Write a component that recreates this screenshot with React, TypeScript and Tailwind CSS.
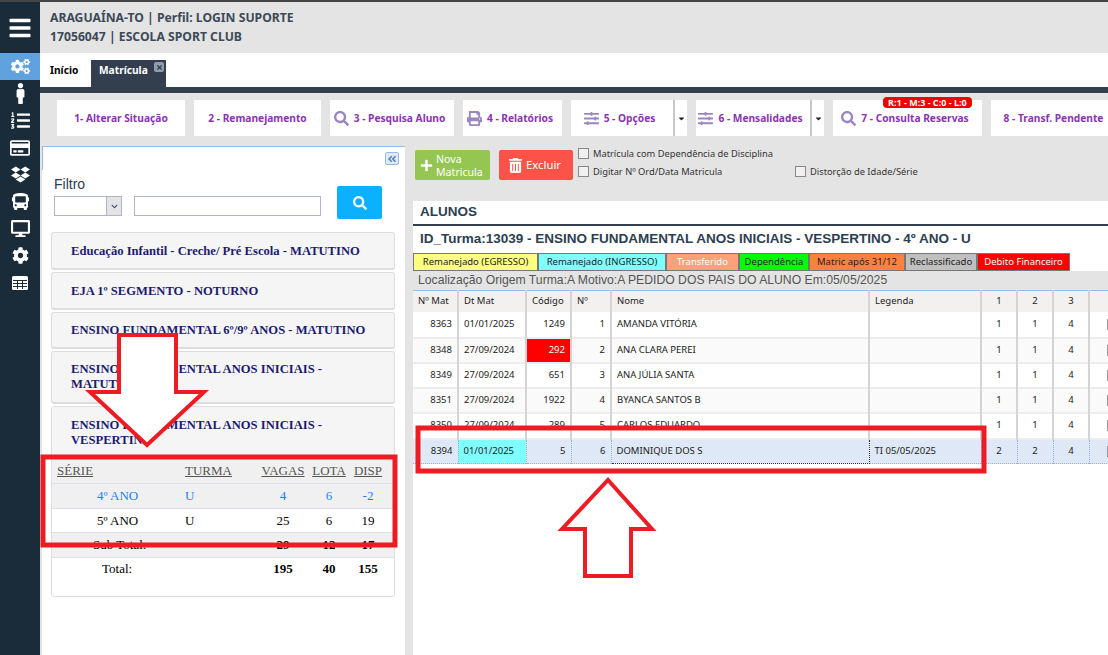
import React from 'react';
import {
  FaBars, FaCogs, FaMale, FaListOl, FaRegCreditCard, FaDropbox, FaBus, FaDesktop, FaCog,
  FaSearch, FaPrint, FaSlidersH, FaPlus, FaTrashAlt, FaTimes, FaAngleDoubleLeft, FaChevronDown, FaCaretDown,
} from 'react-icons/fa';

// FA4 style table, the FA5 one in react-icons has too few cells
const TableIcon = () => (
  <svg width="16" height="14" viewBox="0 0 16 14">
    <rect width="16" height="14" rx="1.5" fill="#fff" />
    <path d="M1 4.5H15M1 7.5H15M1 10.5H15M5.5 4V13M10.5 4V13" stroke="#1a2b3a" strokeWidth="1" />
  </svg>
);

const sideIcons = [
  <FaMale className="text-[21px]" />,
  <FaListOl className="text-[19px]" />,
  <FaRegCreditCard className="text-[20px]" />,
  <FaDropbox className="text-[19px]" />,
  <FaBus className="text-[17px]" />,
  <FaDesktop className="text-[19px]" />,
  <FaCog className="text-[17px]" />,
  <TableIcon />,
];

const ToolButton = ({ label, icon: Icon, width, caret, badge, nudge }: { label: string; icon?: any; width: string; caret?: boolean; badge?: string; nudge?: boolean }) => (
  <div className="flex shrink-0">
    <div className={`relative flex h-[36px] items-center justify-center gap-[5px] bg-white ${width} ${caret ? 'border-r-2 border-[#c8c8c8]' : ''} ${Icon || nudge ? 'pr-[5px]' : ''}`}>
      {Icon && <Icon className="text-[15px] text-[#9b86c0]" />}
      <span className="whitespace-nowrap pt-[1px] text-[10.2px] font-bold text-[#8a34b0]">{label}</span>
      {badge && (
        <span className="absolute left-[50px] top-[-3px] rounded-[4px] bg-[#f00000] px-[5px] text-[9px] font-bold leading-[11px] text-white">{badge}</span>
      )}
    </div>
    {caret && (
      <div className="flex h-[36px] w-[12px] items-center justify-center bg-white">
        <FaCaretDown className="text-[9px] text-[#222]" />
      </div>
    )}
  </div>
);

const accordion = [
  { title: 'Educação Infantil - Creche/ Pré Escola - MATUTINO', h: 'h-[38px] pt-[2px]' },
  { title: 'EJA 1º SEGMENTO - NOTURNO', h: 'h-[38px] pt-[2px]' },
  { title: 'ENSINO FUNDAMENTAL 6º/9º ANOS - MATUTINO', h: 'h-[37px]' },
  { title: 'ENSINO FUNDAMENTAL ANOS INICIAIS - MATUTINO', h: 'h-[53px]' },
];

const legend = [
  { label: 'Remanejado (EGRESSO)', w: 'w-[125px]', bg: 'bg-[#ffff80]', text: 'text-[#222]' },
  { label: 'Remanejado (INGRESSO)', w: 'w-[128px]', bg: 'bg-[#80ffff]', text: 'text-[#222]' },
  { label: 'Transferido', w: 'w-[73px]', bg: 'bg-[#ffa07a]', text: 'text-white' },
  { label: 'Dependência', w: 'w-[70px]', bg: 'bg-[#00ff00]', text: 'text-[#222]' },
  { label: 'Matric após 31/12', w: 'w-[96px]', bg: 'bg-[#ff8040]', text: 'text-[#222]' },
  { label: 'Reclassificado', w: 'w-[72px]', bg: 'bg-[#c0c0c0]', text: 'text-[#222]' },
  { label: 'Debito Financeiro', w: 'w-[93px]', bg: 'bg-[#ff0000]', text: 'text-white' },
];

const alunos = [
  { mat: '8363', dt: '01/01/2025', cod: '1249', n: '1', nome: 'AMANDA VITÓRIA', a: '1', b: '1', c: '4', h: 'h-[26px]' },
  { mat: '8348', dt: '27/09/2024', cod: '292', n: '2', nome: 'ANA CLARA PEREI', a: '1', b: '1', c: '4', h: 'h-[25px]', red: true, alt: true },
  { mat: '8349', dt: '27/09/2024', cod: '651', n: '3', nome: 'ANA JÚLIA SANTA', a: '1', b: '1', c: '4', h: 'h-[25px]' },
  { mat: '8351', dt: '27/09/2024', cod: '1922', n: '4', nome: 'BYANCA SANTOS B', a: '1', b: '1', c: '4', h: 'h-[25px]', alt: true },
  { mat: '8350', dt: '27/09/2024', cod: '289', n: '5', nome: 'CARLOS EDUARDO', a: '1', b: '1', c: '4', h: 'h-[26px]' },
];

const headers = [
  { label: 'Nº Mat', align: 'text-left pl-[5px]', w: 'w-[45px]' },
  { label: 'Dt Mat', align: 'text-left pl-[5px]', w: 'w-[68px]' },
  { label: 'Código', align: 'text-left pl-[5px]', w: 'w-[45px]' },
  { label: 'Nº', align: 'text-left pl-[5px]', w: 'w-[40px]' },
  { label: 'Nome', align: 'text-left pl-[5px]', w: 'w-[258px]' },
  { label: 'Legenda', align: 'text-left pl-[5px]', w: 'w-[112px]' },
  { label: '1', align: 'text-center', w: 'w-[36px]' },
  { label: '2', align: 'text-center', w: 'w-[36px]' },
  { label: '3', align: 'text-center', w: 'w-[36px]' },
  { label: '', align: 'text-center', w: 'w-[36px]' },
];

const Check = () => <span className="inline-block h-[11px] w-[11px] shrink-0 border border-[#888] bg-[#f0f0f0]" />;

const cell = 'border-r-2 border-[#d4d4d4] px-[5px]';

const Annotations = () => (
  <svg className="pointer-events-none absolute left-0 top-0" width="1108" height="655">
    <g fill="none" stroke="#ed1c24" strokeWidth="5">
      <rect x="43" y="457" width="352" height="88" />
      <rect x="418" y="428" width="566" height="43" />
    </g>
    <g stroke="#ed1c24" strokeWidth="4" strokeLinejoin="miter">
      <path d="M119 335 H176 V392 H204 L147 445 L90 392 H119 Z" fill="#fff" />
      <path d="M608 480 L652 529 H631 V576 H585 V529 H562 Z" fill="#fff" />
    </g>
  </svg>
);

export default function App() {
  return (
    <div className="relative flex h-[655px] w-[1108px] overflow-hidden bg-[#e4e4e4] font-['Noto_Sans',sans-serif]">
      <aside className="flex w-[40px] shrink-0 flex-col items-center border-t-2 border-[#444] bg-[#1a2b3a] text-white">
        <div className="flex h-[51px] w-full items-center justify-center">
          <FaBars className="text-[24px]" />
        </div>
        <div className="flex h-[27px] w-full items-center justify-center bg-[#5fa2dd]">
          <FaCogs className="text-[19px]" />
        </div>
        <div className="flex w-full flex-col items-center">
          {sideIcons.map((icon, i) => (
            <div key={i} className="flex h-[27px] w-full items-center justify-center">{icon}</div>
          ))}
        </div>
      </aside>

      <div className="flex min-w-0 flex-1 flex-col border-t-2 border-[#444]">
        <header className="flex h-[51px] shrink-0 flex-col justify-center gap-[2px] pb-[2px] pl-[10px] text-[12.2px] font-bold leading-[17px] text-[#3c4a58]">
          <div>ARAGUAÍNA-TO | Perfil: LOGIN SUPORTE</div>
          <div>17056047 | ESCOLA SPORT CLUB</div>
        </header>

        <nav className="flex h-[34px] shrink-0 items-end bg-white pl-[10px] text-[10.2px] font-bold">
          <div className="flex h-[27px] w-[41px] items-center pb-[6px] text-black">Início</div>
          <div className="relative flex h-[27px] w-[75px] items-center bg-[#333f4f] pb-[6px] pl-[8px] text-white">
            Matrícula
            <span className="absolute right-[2px] top-[2px] flex h-[10px] w-[10px] items-center justify-center rounded-[2px] bg-[#8f9cad]">
              <FaTimes className="text-[7px] text-[#333f4f]" />
            </span>
          </div>
        </nav>
        <div className="h-[6px] shrink-0 bg-[#333f4f]" />

        <div className="flex shrink-0 gap-[9px] overflow-hidden pl-[17px] pt-[7px]">
          <ToolButton label="1- Alterar Situação" width="w-[128px]" />
          <ToolButton label="2 - Remanejamento" width="w-[127px]" />
          <ToolButton label="3 - Pesquisa Aluno" icon={FaSearch} width="w-[124px]" />
          <ToolButton label="4 - Relatórios" icon={FaPrint} width="w-[99px]" />
          <ToolButton label="5 - Opções" icon={FaSlidersH} width="w-[104px]" caret />
          <ToolButton label="6 - Mensalidades" icon={FaSlidersH} width="w-[116px]" caret />
          <ToolButton label="7 - Consulta Reservas" icon={FaSearch} width="w-[149px]" badge="R:1 - M:3 - C:0 - L:0" />
          <ToolButton label="8 - Transf. Pendente" width="w-[130px]" nudge />
        </div>

        <div className="flex min-h-0 flex-1 gap-[8px] pl-[2px] pt-[10px]">
          <section className="flex w-[363px] shrink-0 flex-col border-t border-[#99bbe8] bg-white">
            <div className="flex h-[23px] justify-end border-l border-[#99bbe8] pr-[6px] pt-[5px]">
              <span className="flex h-[13px] w-[14px] items-center justify-center rounded-[2px] border border-[#99bbe8] bg-[#dfe8f6]">
                <FaAngleDoubleLeft className="text-[10px] text-[#5580b0]" />
              </span>
            </div>
            <div className="flex h-[62px] pl-[12px] font-['Liberation_Sans',sans-serif]">
              <div className="w-[80px]">
                <div className="pt-[6px] text-[14px] leading-[16px] text-[#2c3e50]">Filtro</div>
                <div className="mt-[4px] flex h-[20px] w-[68px] border border-[#b0b4c8] bg-white">
                  <div className="flex-1" />
                  <div className="flex w-[15px] items-center justify-center border-l border-[#b0b4c8] bg-[#e4e4e4]">
                    <FaChevronDown className="text-[7px] text-[#3a4a70]" />
                  </div>
                </div>
              </div>
              <div className="mt-[26px] h-[20px] w-[187px] border border-[#b0b4c8] bg-white" />
              <button className="ml-[16px] mt-[16px] flex h-[33px] w-[45px] items-center justify-center rounded-[2px] bg-[#0bb0ff]">
                <FaSearch className="text-[14px] text-white" />
              </button>
            </div>

            <div className="ml-[9px] mr-[10px] flex flex-col gap-[2px] font-['Liberation_Serif',serif]">
              {accordion.map((a) => (
                <div key={a.title} className={`flex items-center rounded-[3px] border border-b-2 border-[#ddd] bg-[#f5f5f5] pl-[19px] pr-[20px] text-[12.6px] font-bold leading-[15px] text-[#1b1b6f] ${a.h}`}>
                  <span>{a.title}</span>
                </div>
              ))}
              <div className="rounded-[3px] border border-[#ddd] bg-white">
                <div className="flex h-[51px] items-center bg-[#f5f5f5] pl-[19px] pr-[20px] text-[12.6px] font-bold leading-[15px] text-[#1b1b6f]">
                  <span>ENSINO FUNDAMENTAL ANOS INICIAIS - VESPERTINO</span>
                </div>
                <table className="w-full table-fixed border-collapse text-[13px] leading-[15px]">
                  <colgroup>
                    <col className="w-[133px]" />
                    <col className="w-[71px]" />
                    <col className="w-[54px]" />
                    <col className="w-[38px]" />
                    <col />
                  </colgroup>
                  <tbody>
                    <tr className="h-[25px] border-b border-[#dde2ea] bg-[#f0f0f0] text-[#555] underline">
                      <td className="pl-[5px]">SÉRIE</td>
                      <td>TURMA</td>
                      <td className="text-center">VAGAS</td>
                      <td className="text-center">LOTA</td>
                      <td className="pr-[6px] text-center">DISP</td>
                    </tr>
                    <tr className="h-[25px] border-b border-[#dde2ea] bg-[#f0f0f0] text-[#1a7fff]">
                      <td className="pl-[45px]">4º ANO</td>
                      <td>U</td>
                      <td className="text-center">4</td>
                      <td className="text-center">6</td>
                      <td className="pr-[6px] text-center">-2</td>
                    </tr>
                    <tr className="h-[24px] border-b border-[#dde2ea] text-black">
                      <td className="pl-[45px]">5º ANO</td>
                      <td>U</td>
                      <td className="text-center">25</td>
                      <td className="text-center">6</td>
                      <td className="pr-[6px] text-center">19</td>
                    </tr>
                    <tr className="h-[25px] border-b border-[#dde2ea] bg-[#f0f0f0] text-black">
                      <td className="pl-[41px]">Sub Total:</td>
                      <td />
                      <td className="text-center font-bold">29</td>
                      <td className="text-center font-bold">12</td>
                      <td className="pr-[6px] text-center font-bold">17</td>
                    </tr>
                    <tr className="h-[22px] text-black">
                      <td className="pl-[50px]">Total:</td>
                      <td />
                      <td className="text-center font-bold">195</td>
                      <td className="text-center font-bold">40</td>
                      <td className="pr-[6px] text-center font-bold">155</td>
                    </tr>
                  </tbody>
                </table>
                <div className="h-[17px]" />
              </div>
            </div>
          </section>

          <section className="flex min-w-0 flex-1 flex-col">
            <div className="flex h-[55px] shrink-0 text-[9.3px] text-[#333]">
              <button className="ml-[2px] mt-[4px] flex h-[30px] w-[75px] items-center gap-[3px] rounded-[2px] bg-[#95c652] pl-[5px] text-left text-[10.6px] leading-[13px] text-white">
                <FaPlus className="text-[13px]" />
                <span className="pt-[2px]">Nova<br />Matricula</span>
              </button>
              <button className="ml-[9px] mt-[4px] flex h-[30px] w-[74px] items-center justify-center gap-[3px] rounded-[2px] bg-[#fb5347] pr-[3px] text-[11.3px] text-white">
                <FaTrashAlt className="text-[15px]" />
                Excluir
              </button>
              <div className="ml-[5px] flex flex-col gap-[7px] pt-[2px] leading-[11px]">
                <label className="flex items-center gap-[4px]"><Check />Matrícula com Dependência de Disciplina</label>
                <div className="flex">
                  <label className="flex w-[217px] items-center gap-[4px]"><Check />Digitar Nº Ord/Data Matricula</label>
                  <label className="flex items-center gap-[4px]"><Check />Distorção de Idade/Série</label>
                </div>
              </div>
            </div>

            <div className="flex min-h-0 flex-1 flex-col bg-white">
              <div className="flex h-[25px] shrink-0 items-center border-b-2 border-[#333f4f] pl-[7px] font-['Liberation_Sans',sans-serif] text-[13.5px] font-bold text-[#2c3e50]">ALUNOS</div>
              <div className="flex h-[27px] shrink-0 items-center pl-[7px] font-['Liberation_Sans',sans-serif] text-[13.5px] font-bold text-[#2c3e50]">
                ID_Turma:13039 - ENSINO FUNDAMENTAL ANOS INICIAIS - VESPERTINO - 4º ANO - U
              </div>
              <div className="flex h-[18px] shrink-0 text-[9.5px]">
                {legend.map((l) => (
                  <div key={l.label} className={`flex items-center justify-center whitespace-nowrap border border-[#777] ${l.w} ${l.bg} ${l.text}`}>{l.label}</div>
                ))}
              </div>
              <div className="flex h-[19px] shrink-0 items-center bg-[#e4e4e4] pl-[5px] font-['Liberation_Sans',sans-serif] text-[12.2px] text-[#555]">
                Localização Origem Turma:A Motivo:A PEDIDO DOS PAIS DO ALUNO Em:05/05/2025
              </div>
              <table className="w-[712px] table-fixed border-collapse text-[9.5px] text-[#222]">
                <thead>
                  <tr className="h-[21px] border-t border-[#99bbe8] bg-[#f2f1f0]">
                    {headers.map((h, i) => (
                      <th key={i} className={`border-r-2 border-[#d4d4d4] font-normal ${h.align} ${h.w}`}>{h.label}</th>
                    ))}
                  </tr>
                </thead>
                <tbody>
                  {alunos.map((r) => (
                    <tr key={r.mat} className={`border-b-2 border-[#ededed] ${r.h} ${r.alt ? 'bg-[#fafafa]' : 'bg-white'}`}>
                      <td className={`${cell} text-right`}>{r.mat}</td>
                      <td className={cell}>{r.dt}</td>
                      <td className={`${cell} text-right ${r.red ? 'bg-[#ff0000] text-white' : ''}`}>{r.cod}</td>
                      <td className={`${cell} text-right`}>{r.n}</td>
                      <td className={cell}>{r.nome}</td>
                      <td className={cell} />
                      <td className={`${cell} text-center`}>{r.a}</td>
                      <td className={`${cell} text-center`}>{r.b}</td>
                      <td className={`${cell} text-center`}>{r.c}</td>
                      <td className="pl-[17px]"><span className="block h-[11px] w-[11px] border border-[#999]" /></td>
                    </tr>
                  ))}
                  <tr className="h-[25px] border-y border-dotted border-[#8db2e3] bg-[#dfe8f6]">
                    <td className="border-r border-dotted border-[#8db2e3] px-[5px] text-right">8394</td>
                    <td className="border-r border-dotted border-[#8db2e3] bg-[#80ffff] px-[5px]">01/01/2025</td>
                    <td className="border-r border-dotted border-[#8db2e3] px-[5px] text-right">5</td>
                    <td className="border-r border-dotted border-[#8db2e3] px-[5px] text-right">6</td>
                    <td className="border border-dotted border-[#333] px-[5px]">DOMINIQUE DOS S</td>
                    <td className="border-r border-dotted border-[#8db2e3] px-[5px]">TI 05/05/2025</td>
                    <td className="border-r border-dotted border-[#8db2e3] text-center">2</td>
                    <td className="border-r border-dotted border-[#8db2e3] text-center">2</td>
                    <td className="border-r border-dotted border-[#8db2e3] text-center">4</td>
                    <td className="pl-[17px]"><span className="block h-[11px] w-[11px] border border-[#999]" /></td>
                  </tr>
                </tbody>
              </table>
            </div>
          </section>
        </div>
      </div>
      <Annotations />
    </div>
  );
}
